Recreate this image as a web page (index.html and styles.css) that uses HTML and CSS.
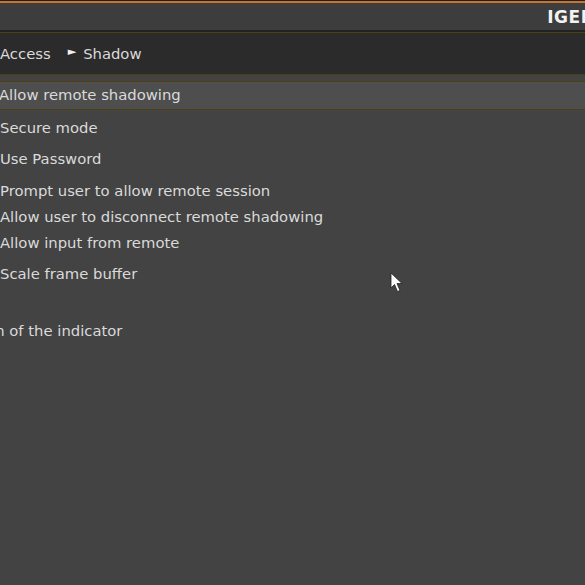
FILE: index.html
```html
<!DOCTYPE html>
<html lang="en">
<head>
    <meta charset="UTF-8">
    <meta name="viewport" content="width=device-width, initial-scale=1.0">
    <title>IGEL Setup - Shadow</title>
    <link rel="stylesheet" href="styles.css">
</head>
<body>
    <!-- Window title bar -->
    <div class="titlebar">
        <span class="brand">IGEL</span>
    </div>

    <!-- Breadcrumb -->
    <div class="breadcrumb">
        <span>Access</span>
        <span class="arrow">&#9658;</span>
        <span>Shadow</span>
    </div>

    <!-- Settings list -->
    <div class="settings">
        <div class="row selected">Allow remote shadowing</div>
        <div class="row r-secure">Secure mode</div>
        <div class="row r-pass">Use Password</div>
        <div class="row r-prompt">Prompt user to allow remote session</div>
        <div class="row r-disc">Allow user to disconnect remote shadowing</div>
        <div class="row r-input">Allow input from remote</div>
        <div class="row r-scale">Scale frame buffer</div>
        <div class="row r-indicator"><span class="clipped">Position of the indicator</span></div>
    </div>

    <!-- Mouse pointer -->
    <svg class="pointer" width="14" height="22" viewBox="0 0 14 22">
        <path d="M1 1 L1 16 L4.5 12.5 L7.5 19.5 L10 18.5 L7 11.5 L12 11.5 Z" fill="#ffffff" stroke="#222" stroke-width="0.8"/>
    </svg>
</body>
</html>
```

FILE: styles.css
```css
body {
    margin: 0;
    height: 585px;
    overflow: hidden;
    background-color: #434343;
    font-family: "DejaVu Sans", sans-serif;
    font-size: 14.8px;
    color: #dadada;
    position: relative;
}
.titlebar {
    height: 27px;
    border-top: 1px solid #202020;
    box-shadow: inset 0 2px 0 #c5752c;
    padding-top: 2px;
    background-color: #3d3d3d;
    display: flex;
    justify-content: flex-end;
    align-items: center;
    overflow: hidden;
}
.brand {
    font-weight: bold;
    font-size: 17px;
    color: #f2f2f2;
    margin-right: -7px;
    letter-spacing: 0.5px;
}
.breadcrumb {
    height: 42px;
    background-color: #2b2b2b;
    border-top: 2px solid #232323;
    border-bottom: 1px solid #4d4013;
    box-shadow: inset 0 1px 0 #4d4013;
    display: flex;
    align-items: center;
}
.arrow {
    font-size: 11px;
    color: #f0f0f0;
    margin: -3px 7px 0 17px;
}
.settings {
    padding-top: 6px;
}
.row {
    white-space: nowrap;
    line-height: 18px;
}
.selected {
    margin-left: -1px;
    height: 27px;
    line-height: 25px;
    background-color: #4e4e4e;
    border-top: 1px solid #4d4013;
    border-bottom: 1px solid #4d4013;
}
.r-secure { margin-top: 9px; }
.r-pass { margin-top: 13px; }
.r-prompt { margin-top: 14px; }
.r-disc { margin-top: 8px; }
.r-input { margin-top: 8px; }
.r-scale { margin-top: 13px; }
.r-indicator { margin-top: 39px; }
.clipped {
    display: inline-block;
    margin-left: -53px;
}
.pointer {
    position: absolute;
    left: 390px;
    top: 272px;
}
```
